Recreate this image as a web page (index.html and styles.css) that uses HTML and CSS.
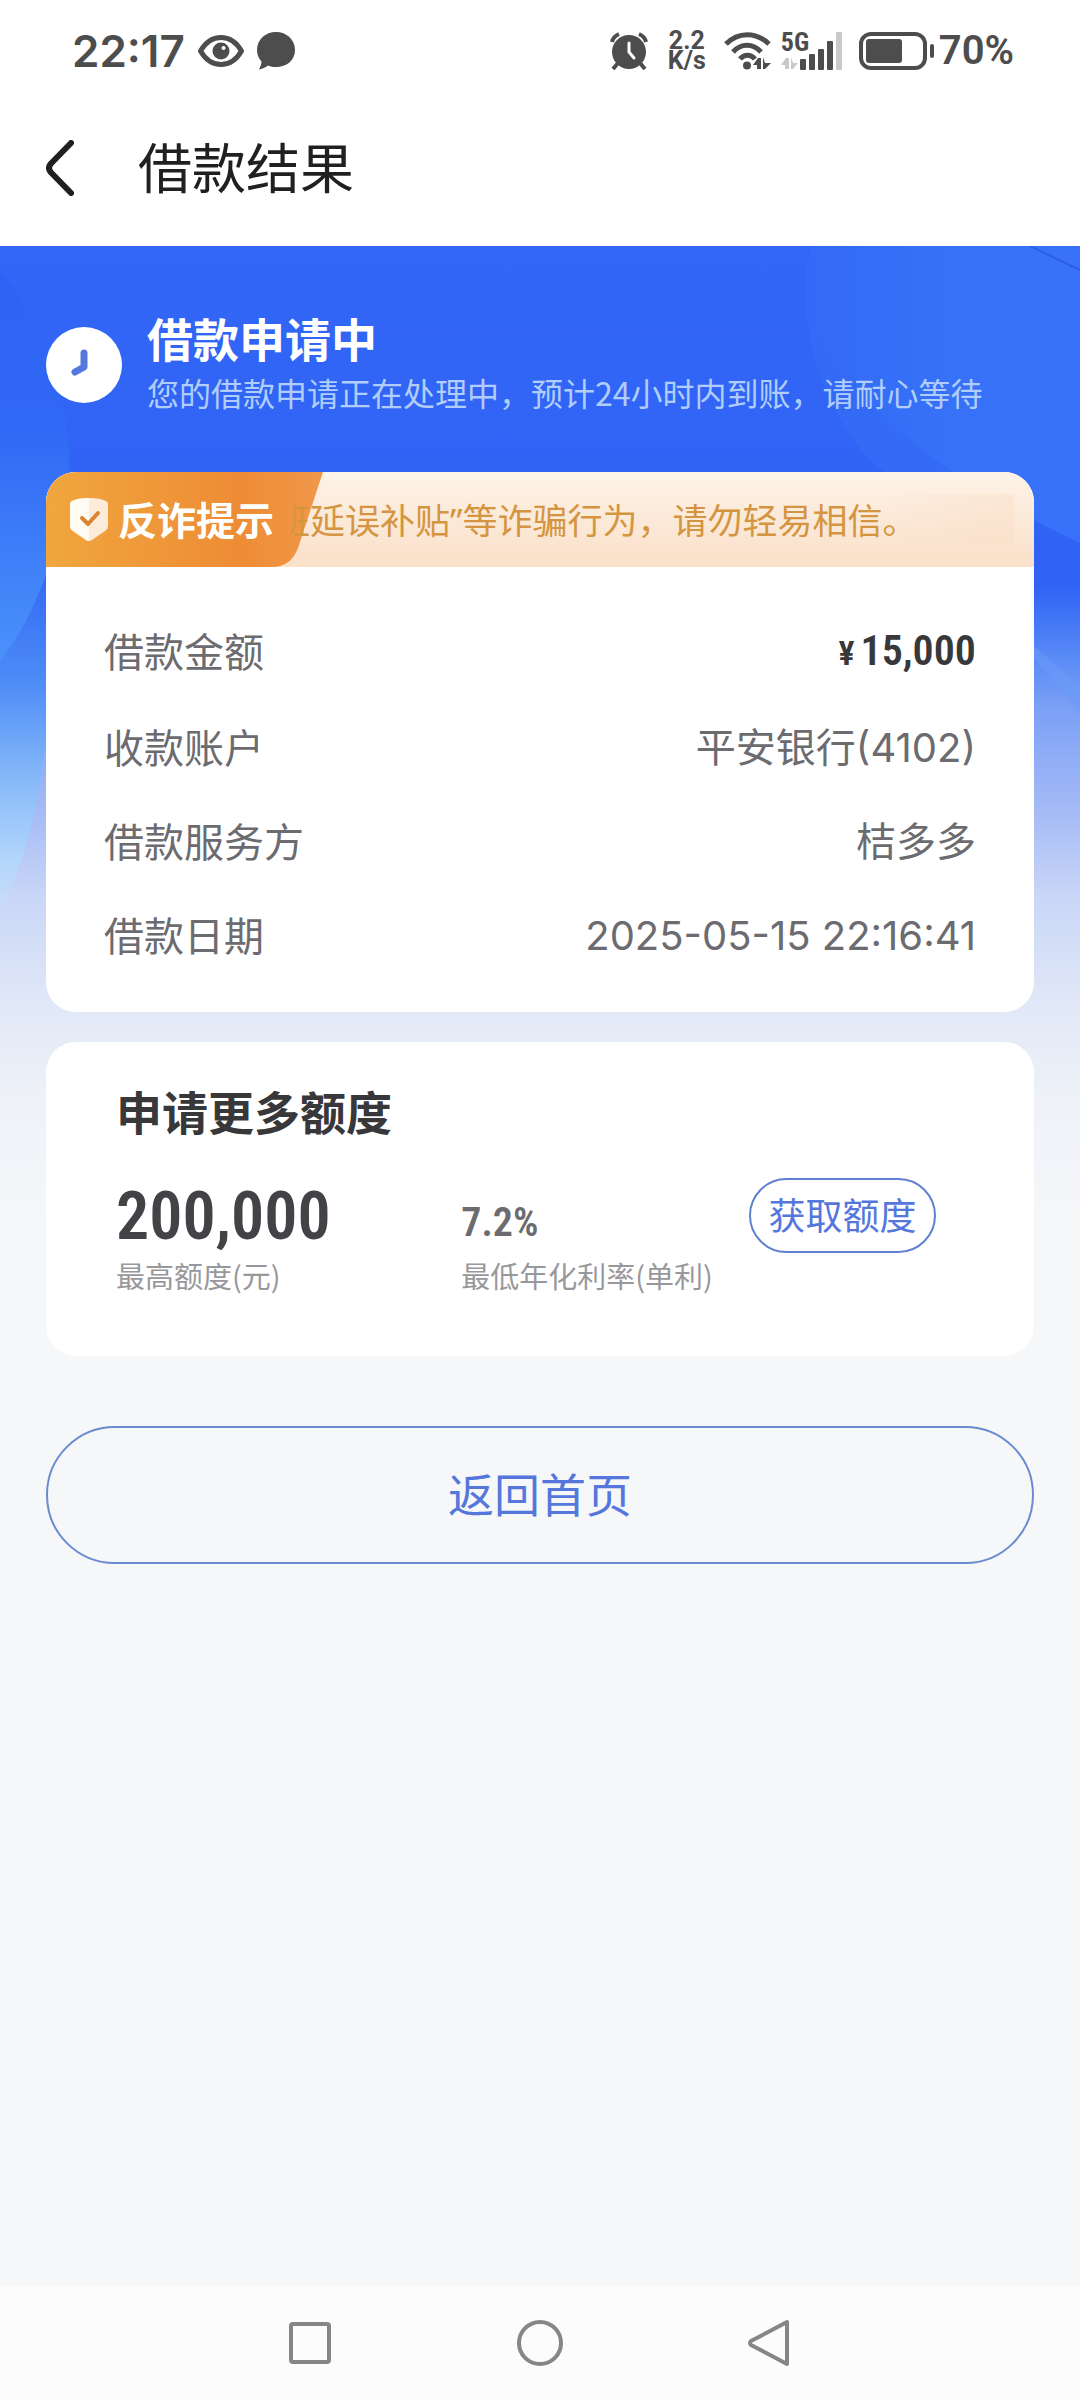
FILE: index.html
```html
<!DOCTYPE html>
<html lang="zh-CN">
<head>
<meta charset="utf-8">
<meta name="viewport" content="width=device-width, initial-scale=1">
<title>借款结果</title>
<link rel="stylesheet" href="styles.css">
</head>
<body>
<header class="top">
  <div class="status">
    <div class="status-group">
      <span class="clock">22:17</span>
      <svg class="icon-eye" viewBox="0 0 46 32" width="46" height="32" aria-hidden="true">
        <path d="M2.5 16C8 6.500 15 2.500 23 2.500S38 6.500 43.500 16C38 25.500 31 29.500 23 29.500S8 25.500 2.500 16Z" fill="none" stroke="#4d4d4d" stroke-width="5" stroke-linejoin="round"/>
        <circle cx="23" cy="16" r="8.500" fill="#4d4d4d"/><circle cx="25.500" cy="13" r="2" fill="#fff"/>
      </svg>
      <svg class="icon-chat" viewBox="0 0 38 38" width="38" height="38" aria-hidden="true">
        <path d="M19 0C29.500 0 38 7.500 38 18S29.500 35 19 35C16 35 13.500 34.500 11 33.500C8.500 35.500 5 37 2 37.500C3.500 34.500 4.500 32 4.500 29.500C1.500 26.500 0 22.500 0 18C0 7.500 8.500 0 19 0Z" fill="#4d4d4d"/>
      </svg>
    </div>
    <div class="status-group">
      <svg class="icon-alarm" viewBox="0 0 38 38" width="38" height="38" aria-hidden="true">
        <circle cx="19" cy="20" r="17" fill="#4d4d4d"/>
        <path d="M2 10A13 11 0 0 1 9 2M36 10A13 11 0 0 0 29 2" stroke="#4d4d4d" stroke-width="4" fill="none"/>
        <path d="M8 31L3 37M30 31L35 37" stroke="#4d4d4d" stroke-width="4"/>
        <path d="M19 11V20L24 26" stroke="#fff" stroke-width="3" fill="none" stroke-linecap="round"/>
      </svg>
      <span class="speed"><span>2.2</span><span>K/s</span></span>
      <svg class="icon-wifi" viewBox="0 0 48 38" width="48" height="38" aria-hidden="true">
        <g fill="none" stroke="#4d4d4d" stroke-width="5"><path d="M2 12C14 -.5 32 -.5 45 12"/><path d="M9 20C17 11 29 11 37 20"/><path d="M16 27C20 22 27 22 31 27"/></g>
        <circle cx="23" cy="33.500" r="4" fill="#4d4d4d"/>
        <path d="M29 33L34 26H37V37H33V33ZM39 25L41 31H47L41 37H39Z" fill="#4d4d4d"/>
      </svg>
      <span class="cell">
        <span class="cell-label">5G</span>
        <svg viewBox="0 0 62 38" width="62" height="38" aria-hidden="true">
          <path d="M0 33L5 26H8V37H4V33ZM10 25L12 31H17L12 37H10Z" fill="#c9c9c9"/>
          <g fill="#4d4d4d"><rect x="19" y="27" width="6" height="11" rx="1"/><rect x="28" y="22" width="6" height="16" rx="1"/><rect x="37" y="17" width="6" height="21" rx="1"/><rect x="46" y="9" width="6" height="29" rx="1"/></g>
          <rect x="55" y="0" width="6" height="38" rx="1" fill="#c9c9c9"/>
        </svg>
      </span>
      <svg class="icon-battery" viewBox="0 0 76 38" width="76" height="38" aria-hidden="true">
        <rect x="2" y="2" width="64" height="34" rx="10" fill="none" stroke="#4d4d4d" stroke-width="4"/>
        <rect x="7" y="7" width="36" height="24" rx="3" fill="#4d4d4d"/>
        <rect x="71" y="12" width="4" height="14" rx="2" fill="#4d4d4d"/>
      </svg>
      <span class="battery-text">70%</span>
    </div>
  </div>
  <div class="titlebar">
    <button class="back" type="button" aria-label="返回">
      <svg viewBox="0 0 28 56" width="28" height="56" aria-hidden="true"><path d="M25 3L5 23.500Q1 28 5 32.500L25 53" fill="none" stroke="#202020" stroke-width="6" stroke-linecap="round" stroke-linejoin="round"/></svg>
    </button>
    <h1>借款结果</h1>
  </div>
</header>

<main class="page">
  <svg class="backdrop" viewBox="0 0 1080 1000" preserveAspectRatio="none" aria-hidden="true">
    <defs>
      <linearGradient id="lens" x1="0" y1="0" x2="0" y2="1"><stop offset="0" stop-color="#2f62f4"/><stop offset=".4" stop-color="#3069f5"/><stop offset="1" stop-color="#4b91fb"/></linearGradient>
      <linearGradient id="stream" gradientUnits="userSpaceOnUse" x1="0" y1="335" x2="0" y2="665"><stop offset="0" stop-color="#356bf5"/><stop offset=".3" stop-color="#4d8bf6"/><stop offset=".6" stop-color="#86b9f9"/><stop offset=".85" stop-color="#b3d6fb"/><stop offset="1" stop-color="#cbdcf8"/></linearGradient>
      <linearGradient id="glow" x1="0" y1="0" x2="1" y2="0"><stop offset="0" stop-color="#336af6"/><stop offset=".5" stop-color="#3671f7"/><stop offset="1" stop-color="#3772f8"/></linearGradient>
    </defs>
    <path d="M0 320H46V490C40 560 20 630 0 665Z" fill="url(#stream)"/>
    <path d="M0 25C40 70 76 160 68 240C62 300 30 380 0 415Z" fill="url(#lens)"/>
    <path d="M812 0C788 70 830 190 886 226H1000V0Z" fill="#346bf6"/>
    <path d="M812 0C795 60 830 120 850 130C890 190 980 250 1080 297V0Z" fill="url(#glow)"/>
    <path d="M1030 0L1080 24" stroke="#2c5fe6" stroke-width="2"/>
    <path d="M1034 400L1080 440V468L1034 412Z" fill="#6a9cf7" opacity=".5"/>
  </svg>

  <section class="result">
    <svg class="icon-clock" viewBox="0 0 76 76" width="76" height="76" aria-hidden="true">
      <circle cx="38" cy="38" r="38" fill="#fff"/><path d="M38 26V40L29 45" fill="none" stroke="#5478e0" stroke-width="7" stroke-linecap="round" stroke-linejoin="round"/>
    </svg>
    <div class="result-text">
      <h2>借款申请中</h2>
      <p>您的借款申请正在处理中，预计24小时内到账，请耐心等待</p>
    </div>
  </section>

  <section class="card">
    <div class="notice">
      <div class="notice-tag">
        <svg class="tag-shape" viewBox="0 0 278 95" preserveAspectRatio="none" aria-hidden="true">
          <defs><linearGradient id="tag" x1="0" y1="0" x2="1" y2="0"><stop offset="0" stop-color="#f0a63e"/><stop offset=".7" stop-color="#ee8c35"/><stop offset="1" stop-color="#f0984a"/></linearGradient></defs>
          <path d="M0 0H277L252 76Q245 95 226 95H0Z" fill="url(#tag)"/>
        </svg>
        <svg class="icon-shield" viewBox="0 0 40 44" width="40" height="44" aria-hidden="true">
          <path d="M20 0C27 0 33 1 37 3Q39 4 39 6V28Q39 31 36 33L23 42Q20 44 17 42L4 33Q1 31 1 28V6Q1 4 3 3C7 1 13 0 20 0Z" fill="#fcebd8"/>
          <path d="M20 0C13 0 7 1 3 3Q1 4 1 6V28Q1 31 4 33L17 42Q18.500 43 20 43Z" fill="#fffaf2"/>
          <path d="M13 20L19 26L29 15" fill="none" stroke="#dc8433" stroke-width="4" stroke-linecap="round" stroke-linejoin="round"/>
        </svg>
        <strong>反诈提示</strong>
      </div>
      <p class="notice-text">班延误补贴<span class="quote">”</span>等诈骗行为，请勿轻易相信。</p>
    </div>
    <dl class="details">
      <div class="row row-amount"><dt>借款金额</dt><dd class="amount"><span class="yen">¥</span>15,000</dd></div>
      <div class="row"><dt>收款账户</dt><dd>平安银行(4102)</dd></div>
      <div class="row"><dt>借款服务方</dt><dd>桔多多</dd></div>
      <div class="row"><dt>借款日期</dt><dd>2025-05-15 22:16:41</dd></div>
    </dl>
  </section>

  <section class="card offer">
    <h2>申请更多额度</h2>
    <div class="offer-grid">
      <div class="figure"><strong class="limit">200,000</strong><span class="caption">最高额度(元)</span></div>
      <div class="figure"><strong class="rate">7.2%</strong><span class="caption">最低年化利率(单利)</span></div>
      <button class="pill" type="button">获取额度</button>
    </div>
  </section>

  <button class="home" type="button">返回首页</button>
</main>

<nav class="sysnav" aria-label="系统导航">
  <button type="button" aria-label="最近任务"><svg viewBox="0 0 48 48" width="48" height="48"><rect x="5" y="5" width="38" height="38" rx="2" fill="none" stroke="#868686" stroke-width="4"/></svg></button>
  <button type="button" aria-label="主页"><svg viewBox="0 0 48 48" width="48" height="48"><circle cx="24" cy="24" r="21" fill="none" stroke="#868686" stroke-width="4"/></svg></button>
  <button type="button" aria-label="返回上一级"><svg viewBox="0 0 48 48" width="48" height="48"><path d="M41 3V45L5 26Q3 24 5 22Z" fill="none" stroke="#868686" stroke-width="4" stroke-linejoin="round"/></svg></button>
</nav>
</body>
</html>
```
FILE: styles.css
```css
* { box-sizing: border-box; }

body {
  margin: 0;
  min-height: 100vh;
  display: flex;
  flex-direction: column;
  background: #f5f7f9;
  color: #6b6b70;
  font-family: "Noto Sans CJK SC", sans-serif;
}

h1, h2, p, dl, dd { margin: 0; }

button {
  padding: 0;
  border: 0;
  background: none;
  font-family: inherit;
  cursor: pointer;
}

svg { display: block; flex: none; }

/* Status bar and page title */
.top { background: #fff; color: #4d4d4d; }

.status {
  display: flex;
  justify-content: space-between;
  align-items: center;
  height: 102px;
  padding: 0 66px 0 72px;
}

.status-group { display: flex; align-items: center; }

.clock { font: 600 44px/48px "Inter", sans-serif; }
.icon-eye { margin-left: 13px; }
.icon-chat { margin-left: 13px; }
.icon-wifi { margin-left: 18px; }

.speed {
  display: flex;
  flex-direction: column;
  align-items: center;
  margin-left: 20px;
  font: 700 25px/20px "Roboto", sans-serif;
}

.cell { position: relative; margin-left: 9px; }
.cell-label {
  position: absolute;
  top: 0;
  left: 0;
  font: 700 26px/20px "Roboto Condensed", "Roboto", sans-serif;
}

.icon-battery { margin-left: 16px; }
.battery-text {
  margin-left: 4px;
  font: 600 40px/48px "Roboto", sans-serif;
}

.titlebar {
  display: flex;
  align-items: center;
  gap: 64px;
  height: 144px;
  padding: 0 46px 12px;
}

.titlebar h1 {
  padding-bottom: 4px;
  font-size: 54px;
  line-height: 80px;
  font-weight: 400;
  color: #202020;
}

/* Result page */
.page {
  position: relative;
  flex: 1;
  display: flex;
  flex-direction: column;
  padding: 60px 46px 40px;
  background: linear-gradient(#3266f6 0, #3063f5 340px, #588af6 410px, #7a9ff6 460px, #a3b9f6 560px, #c9d6f7 650px, #e1e8f7 760px, #eff2f8 860px, #f5f7f9 980px);
}

.backdrop {
  position: absolute;
  top: 0;
  left: 0;
  width: 100%;
  height: 1000px;
}

.result, .card, .home { position: relative; }

.result {
  display: flex;
  align-items: center;
  gap: 25px;
  height: 118px;
  color: #fff;
}

.result-text { padding-bottom: 10px; }

.result h2 {
  font-size: 46px;
  line-height: 64px;
  font-weight: 700;
}

.result p {
  font-size: 32px;
  line-height: 46px;
  color: #b0cdfb;
}

.card {
  margin-top: 48px;
  border-radius: 30px;
  background: #fff;
  overflow: hidden;
}

.notice {
  display: flex;
  align-items: center;
  height: 95px;
  background: linear-gradient(#fdf3e8, #fae0c9);
}

.notice-tag {
  position: relative;
  flex: none;
  display: flex;
  align-items: center;
  gap: 9px;
  width: 278px;
  height: 95px;
  padding-left: 23px;
  color: #fff;
}

.tag-shape {
  position: absolute;
  top: 0;
  left: 0;
  width: 100%;
  height: 100%;
}

.icon-shield, .notice-tag strong { position: relative; }

.notice-tag strong {
  padding-bottom: 4px;
  font-size: 39px;
  line-height: 56px;
}

/* The ticker slides out over the slanted edge of the tag */
.notice-text {
  position: relative;
  flex: 1;
  margin: 0 20px 0 -33px;
  overflow: hidden;
  white-space: nowrap;
  text-indent: -16px;
  font-size: 35px;
  line-height: 50px;
  color: #d59540;
  background: linear-gradient(to right, transparent 80%, rgba(248, 220, 195, .4));
}

.quote { font-family: "Noto Sans", sans-serif; }

.details { padding: 36px 58px 29px; }

.row {
  display: flex;
  justify-content: space-between;
  align-items: center;
  height: 94px;
  font-size: 40px;
  line-height: 58px;
}
.row-amount { height: 98px; }

.row dt { padding-bottom: 4px; }
.row dd { font-family: "Inter", "Noto Sans CJK SC", sans-serif; }

.row .amount, .limit, .rate {
  font-family: "Roboto Condensed", "Roboto", sans-serif;
  font-weight: 600;
}

.row .amount {
  font-size: 42px;
  color: #38383a;
}

.yen { margin-right: 6px; font-size: 34px; }

.offer {
  margin-top: 30px;
  padding: 34px 98px 60px 70px;
}

.offer h2 {
  font-size: 46px;
  line-height: 68px;
  font-weight: 700;
  color: #38383a;
}

.offer-grid {
  display: grid;
  grid-template-columns: 6fr 5fr auto;
  align-items: start;
  padding-top: 34px;
}

.figure { display: flex; flex-direction: column; white-space: nowrap; }

.limit, .rate { height: 76px; }
.limit { font-size: 66px; line-height: 78px; color: #434347; }
.rate { font-size: 40px; line-height: 90px; color: #6b6b70; }

.caption {
  font-size: 29px;
  line-height: 42px;
  color: #98989c;
}

.pill {
  width: 187px;
  height: 75px;
  padding-bottom: 4px;
  border: 2px solid #5f7fd2;
  border-radius: 38px;
  font-size: 37px;
  line-height: 54px;
  color: #5577dc;
}

.home {
  height: 138px;
  margin-top: 70px;
  padding-bottom: 6px;
  border: 2px solid #6a8bd0;
  border-radius: 69px;
  font-size: 46px;
  line-height: 68px;
  color: #5577dc;
}

/* System navigation */
.sysnav {
  display: flex;
  justify-content: center;
  height: 114px;
  background: #fcfcfc;
}

.sysnav button {
  display: flex;
  justify-content: center;
  align-items: center;
  width: 230px;
}
```
